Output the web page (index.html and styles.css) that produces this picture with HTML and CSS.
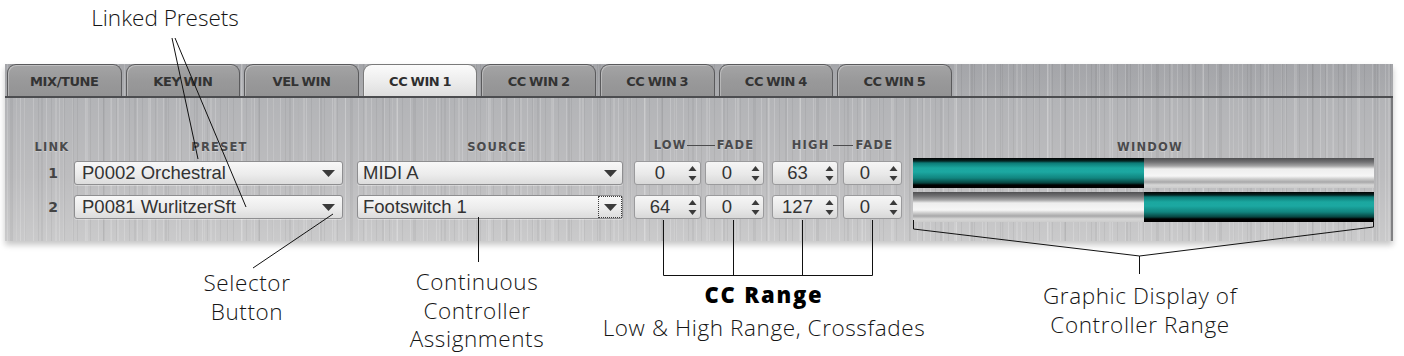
FILE: index.html
```html
<!DOCTYPE html>
<html>
<head>
<meta charset="utf-8">
<link rel="stylesheet" href="styles.css">
</head>
<body>
<div class="figure">
  <div class="panel">
    <div class="tabs">
      <div class="tab">MIX/TUNE</div>
      <div class="tab">KEY WIN</div>
      <div class="tab">VEL WIN</div>
      <div class="tab active">CC WIN 1</div>
      <div class="tab">CC WIN 2</div>
      <div class="tab">CC WIN 3</div>
      <div class="tab">CC WIN 4</div>
      <div class="tab">CC WIN 5</div>
    </div>
    <div class="body">
      <div class="row head">
        <div class="c-link"><span class="hd">LINK</span></div>
        <div class="c-preset hd-preset"><span class="hd">PRESET</span></div>
        <div class="c-source hd-source"><span class="hd">SOURCE</span></div>
        <div class="c-range">
          <div class="hd-pair hd-low"><span class="hd">LOW</span><i class="dash dash-low"></i><span class="hd">FADE</span></div>
          <div class="hd-pair hd-high"><span class="hd">HIGH</span><i class="dash dash-high"></i><span class="hd">FADE</span></div>
        </div>
        <div class="c-window hd-window"><span class="hd">WINDOW</span></div>
      </div>

      <div class="row">
        <div class="c-link num">1</div>
        <div class="c-preset select">
          <span class="val">P0002 Orchestral</span>
          <span class="arrow arrow-preset"><svg width="13" height="7" viewBox="0 0 13 7"><polygon points="0,0 13,0 6.5,7" fill="#3a3a3a"/></svg></span>
        </div>
        <div class="c-source select">
          <span class="val val-source">MIDI A</span>
          <span class="arrow arrow-source"><svg width="13" height="7" viewBox="0 0 13 7"><polygon points="0,0 13,0 6.5,7" fill="#3a3a3a"/></svg></span>
        </div>
        <div class="c-range">
          <div class="spin s-low"><span class="v">0</span><span class="arr"><svg width="9" height="17" viewBox="0 0 9 17"><polygon points="0.5,6 4.5,1 8.5,6" fill="#3a3a3a"/><polygon points="0.5,11 8.5,11 4.5,16" fill="#3a3a3a"/></svg></span></div>
          <div class="spin s-fade"><span class="v">0</span><span class="arr"><svg width="9" height="17" viewBox="0 0 9 17"><polygon points="0.5,6 4.5,1 8.5,6" fill="#3a3a3a"/><polygon points="0.5,11 8.5,11 4.5,16" fill="#3a3a3a"/></svg></span></div>
          <div class="spin s-high"><span class="v">63</span><span class="arr"><svg width="9" height="17" viewBox="0 0 9 17"><polygon points="0.5,6 4.5,1 8.5,6" fill="#3a3a3a"/><polygon points="0.5,11 8.5,11 4.5,16" fill="#3a3a3a"/></svg></span></div>
          <div class="spin s-fade2"><span class="v">0</span><span class="arr"><svg width="9" height="17" viewBox="0 0 9 17"><polygon points="0.5,6 4.5,1 8.5,6" fill="#3a3a3a"/><polygon points="0.5,11 8.5,11 4.5,16" fill="#3a3a3a"/></svg></span></div>
        </div>
        <div class="c-window">
          <div class="bar">
            <div class="fill" style="width:50%"></div>
            <div class="empty"></div>
          </div>
        </div>
      </div>

      <div class="row">
        <div class="c-link num">2</div>
        <div class="c-preset select">
          <span class="val">P0081 WurlitzerSft</span>
          <span class="arrow arrow-preset"><svg width="13" height="7" viewBox="0 0 13 7"><polygon points="0,0 13,0 6.5,7" fill="#3a3a3a"/></svg></span>
        </div>
        <div class="c-source select">
          <span class="val val-source">Footswitch 1</span>
          <span class="arrow arrow-source focus"><svg width="13" height="7" viewBox="0 0 13 7"><polygon points="0,0 13,0 6.5,7" fill="#3a3a3a"/></svg></span>
        </div>
        <div class="c-range">
          <div class="spin s-low"><span class="v">64</span><span class="arr"><svg width="9" height="17" viewBox="0 0 9 17"><polygon points="0.5,6 4.5,1 8.5,6" fill="#3a3a3a"/><polygon points="0.5,11 8.5,11 4.5,16" fill="#3a3a3a"/></svg></span></div>
          <div class="spin s-fade"><span class="v">0</span><span class="arr"><svg width="9" height="17" viewBox="0 0 9 17"><polygon points="0.5,6 4.5,1 8.5,6" fill="#3a3a3a"/><polygon points="0.5,11 8.5,11 4.5,16" fill="#3a3a3a"/></svg></span></div>
          <div class="spin s-high"><span class="v">127</span><span class="arr"><svg width="9" height="17" viewBox="0 0 9 17"><polygon points="0.5,6 4.5,1 8.5,6" fill="#3a3a3a"/><polygon points="0.5,11 8.5,11 4.5,16" fill="#3a3a3a"/></svg></span></div>
          <div class="spin s-fade2"><span class="v">0</span><span class="arr"><svg width="9" height="17" viewBox="0 0 9 17"><polygon points="0.5,6 4.5,1 8.5,6" fill="#3a3a3a"/><polygon points="0.5,11 8.5,11 4.5,16" fill="#3a3a3a"/></svg></span></div>
        </div>
        <div class="c-window">
          <div class="bar">
            <div class="empty" style="width:50%"></div>
            <div class="fill grow"></div>
          </div>
        </div>
      </div>
    </div>
  </div>

  <svg class="leaders" width="1404" height="356" viewBox="0 0 1404 356">
    <g stroke="#111" stroke-width="1" fill="none">
      <line x1="172" y1="38" x2="198" y2="159"/>
      <line x1="175" y1="38" x2="246" y2="207"/>
      <line x1="333" y1="214" x2="253" y2="268"/>
      <line x1="478.5" y1="217" x2="478.5" y2="262"/>
      <polyline points="663.5,220 663.5,275.5 872.5,275.5 872.5,220"/>
      <line x1="733.5" y1="220" x2="733.5" y2="275"/>
      <line x1="802.5" y1="220" x2="802.5" y2="275"/>
      <polyline points="913.5,220 913.5,229 1139.5,256 1373.5,227 1373.5,220"/>
      <line x1="1139.5" y1="256" x2="1139.5" y2="274"/>
    </g>
  </svg>

  <div class="callout co-linked">Linked Presets</div>
  <div class="callout co-selector">Selector<br>Button</div>
  <div class="callout co-cont">Continuous<br>Controller<br>Assignments</div>
  <div class="callout co-range"><b class="cc-title">CC Range</b><br>Low &amp; High Range, Crossfades</div>
  <div class="callout co-graphic">Graphic Display of<br>Controller Range</div>
</div>
</body>
</html>
```

FILE: styles.css
```css
html, body {
  margin: 0;
  padding: 0;
  background: #ffffff;
}

body {
  width: 1404px;
  height: 356px;
  overflow: hidden;
  font-family: "DejaVu Sans", sans-serif;
}

.figure {
  position: relative;
  width: 1404px;
  height: 356px;
  box-sizing: border-box;
  padding: 64px 0 0 5px;
}

.panel {
  width: 1388px;
  box-shadow: 0 4px 6px rgba(0, 0, 0, 0.22);
}

/* ---------- tabs ---------- */
.tabs {
  height: 34px;
  box-sizing: border-box;
  display: flex;
  align-items: flex-end;
  gap: 4px;
  padding-left: 2px;
  border-bottom: 2px solid #4c4d50;
  background-color: #a7a8ab;
  background-image:
    repeating-linear-gradient(90deg, rgba(255,255,255,0) 0 2px, rgba(255,255,255,0.16) 2px 3px, rgba(255,255,255,0) 3px 7px, rgba(0,0,0,0.06) 7px 8px, rgba(255,255,255,0) 8px 13px),
    repeating-linear-gradient(90deg, rgba(0,0,0,0) 0 5px, rgba(0,0,0,0.05) 5px 7px, rgba(0,0,0,0) 7px 19px, rgba(255,255,255,0.12) 19px 21px, rgba(0,0,0,0) 21px 31px),
    repeating-linear-gradient(90deg, rgba(255,255,255,0) 0 11px, rgba(255,255,255,0.1) 11px 12px, rgba(255,255,255,0) 12px 47px),
    linear-gradient(to bottom, #a4a5a9, #abacaf);
}

.tab {
  width: 114.6px;
  height: 32px;
  box-sizing: border-box;
  border: 1px solid #5a5a5c;
  border-bottom: none;
  border-radius: 9px 9px 0 0;
  background: linear-gradient(to bottom, #a4a4a5, #99999a 50%, #939394);
  box-shadow: inset 1px 1px 0 rgba(255, 255, 255, 0.3);
  display: flex;
  align-items: center;
  justify-content: center;
  padding-top: 2px;
  font-size: 13px;
  font-weight: bold;
  color: #333333;
  word-spacing: -1px;
  letter-spacing: -0.4px;
}

.tab.active {
  background: linear-gradient(to bottom, #fbfbfb, #ececec 55%, #dedede);
  border-color: #7a7a7a;
  color: #2e2e2e;
}

/* ---------- body ---------- */
.body {
  height: 143px;
  box-sizing: border-box;
  padding: 38px 0 0 25px;
  border-right: 2px solid rgba(70, 70, 72, 0.55);
  background-color: #b8b8ba;
  background-image:
    repeating-linear-gradient(90deg, rgba(255,255,255,0) 0 2px, rgba(255,255,255,0.18) 2px 3px, rgba(255,255,255,0) 3px 7px, rgba(0,0,0,0.05) 7px 8px, rgba(255,255,255,0) 8px 13px),
    repeating-linear-gradient(90deg, rgba(0,0,0,0) 0 5px, rgba(0,0,0,0.045) 5px 7px, rgba(0,0,0,0) 7px 19px, rgba(255,255,255,0.13) 19px 21px, rgba(0,0,0,0) 21px 31px),
    repeating-linear-gradient(90deg, rgba(255,255,255,0) 0 11px, rgba(255,255,255,0.1) 11px 12px, rgba(255,255,255,0) 12px 47px),
    linear-gradient(to bottom, #b3b4b7, #bdbdbf 55%, #cacacb);
}

.row {
  display: flex;
  align-items: center;
  height: 30px;
  margin-bottom: 4px;
}

.row.head {
  height: 18px;
}

.c-link   { width: 44px; flex: none; text-align: center; }
.c-preset { width: 269px; flex: none; }
.c-source { width: 266px; flex: none; margin-left: 14px; }
.c-range  { width: 268px; flex: none; margin-left: 11px; display: flex; align-items: center; }
.c-window { width: 461px; flex: none; margin-left: 11px; }

/* headers */
.hd {
  font-size: 11.5px;
  font-weight: bold;
  letter-spacing: 1.2px;
  color: #4a4a4c;
  text-shadow: 0 1px 0 rgba(255, 255, 255, 0.25);
}

.hd-preset, .hd-source, .hd-window { text-align: center; }
.hd-preset { padding-left: 22px; box-sizing: border-box; }
.hd-source { padding-left: 14px; box-sizing: border-box; }
.hd-window { padding-left: 13px; box-sizing: border-box; }

.hd-pair {
  width: 130px;
  box-sizing: border-box;
  display: flex;
  align-items: center;
  justify-content: center;
}
.hd-low  { padding-left: 10px; margin-right: 8px; }
.hd-high { padding-left: 11px; }

.dash {
  display: block;
  height: 1px;
  background: #4c4c4e;
}
.dash-low  { width: 28px; margin: 0 2px 0 0; }
.dash-high { width: 20px; margin: 0 3px 0 3px; }

/* row numbers */
.num {
  font-size: 14px;
  font-weight: bold;
  color: #444;
  padding-left: 2px;
  box-sizing: border-box;
}

/* dropdowns */
.select {
  height: 24px;
  box-sizing: border-box;
  border: 1px solid #8e8e90;
  border-radius: 3px;
  background: linear-gradient(to bottom, #f8f8f8, #ececec 55%, #dcdcdc);
  box-shadow: 0 1px 0 rgba(255, 255, 255, 0.35);
  display: flex;
  align-items: center;
  font-family: "Liberation Sans", Arial, sans-serif;
  font-size: 18.5px;
  color: #333333;
}

.val {
  flex: 1;
  padding-left: 7px;
  white-space: nowrap;
  overflow: hidden;
}
.val-source { padding-left: 5px; }

.arrow {
  flex: none;
  display: flex;
  align-items: center;
  justify-content: center;
  height: 100%;
  box-sizing: border-box;
}
.arrow-preset { width: 28px; }
.arrow-source { width: 24px; }
.arrow.focus { border: 1px dotted #3c3c3c; }

/* spin boxes */
.spin {
  height: 24px;
  box-sizing: border-box;
  border: 1px solid #9a9a9c;
  border-radius: 3px;
  background: linear-gradient(to bottom, #f6f6f6, #e9e9e9 55%, #d8d8d8);
  display: flex;
  align-items: center;
  font-family: "Liberation Sans", Arial, sans-serif;
  font-size: 18.5px;
  color: #333333;
}
.spin .v {
  flex: 1;
  text-align: center;
}
.spin .arr {
  width: 15px;
  flex: none;
  display: flex;
  justify-content: center;
  align-items: center;
}
.s-low   { width: 67px; margin-right: 4px; }
.s-fade  { width: 59px; margin-right: 8px; }
.s-high  { width: 66px; margin-right: 5px; }
.s-fade2 { width: 59px; }

/* window bars */
.bar {
  display: flex;
  height: 30px;
}

.fill {
  height: 30px;
  background: linear-gradient(to bottom,
    #020202 0px, #052523 3px, #0c7a76 5px, #1ba79f 10px, #1ca8a1 14px,
    #11857f 20px, #06433f 25px, #000 27px, #000 30px);
}
.fill.grow { flex: 1; }

.empty {
  flex: 1;
  height: 30px;
  background: linear-gradient(to bottom,
    #505052 0px, #717173 4px, #a5a5a6 8px, #eeeeee 11px, #f6f6f6 18px,
    #cdcdcd 21px, #a8a8a9 24px, #d6d6d6 27px, #cccccc 30px);
}

/* ---------- callouts ---------- */
.leaders {
  position: absolute;
  left: 0;
  top: 0;
  pointer-events: none;
}

.callout {
  position: absolute;
  font-family: "Open Sans", "DejaVu Sans", sans-serif;
  font-weight: 300;
  font-size: 22.5px;
  letter-spacing: 0.6px;
  color: #151515;
  text-align: center;
  white-space: nowrap;
  transform: translateX(-50%);
}

.co-linked   { left: 165px;  top: 4px;   line-height: 28px; letter-spacing: 0; }
.co-selector { left: 247px;  top: 268px; line-height: 29px; }
.co-cont     { left: 477px;  top: 268px; line-height: 28.5px; }
.co-range    { left: 764px;  top: 278px; line-height: 33px; }
.co-graphic  { left: 1140px; top: 281px; line-height: 29px; }

.cc-title {
  font-weight: 800;
  font-size: 22px;
  letter-spacing: 1.8px;
  color: #000;
}
```
